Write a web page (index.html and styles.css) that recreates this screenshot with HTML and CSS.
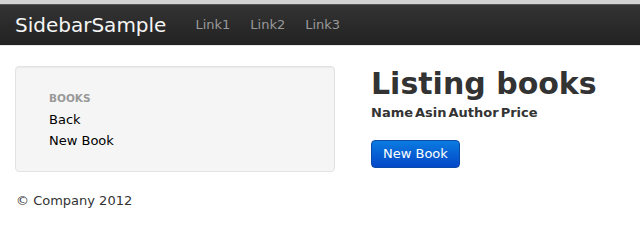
FILE: index.html
```html
<!DOCTYPE html>
<html lang="en">

<head>
  <meta charset="UTF-8">
  <meta name="viewport" content="width=device-width, initial-scale=1.0">
  <title>SidebarSample</title>
  <link rel="stylesheet" href="styles.css">
</head>

<body>
  <div class="topbar"></div>
  <div class="navbar">
    <a class="brand" href="#">SidebarSample</a>
    <ul class="nav">
      <li><a href="#">Link1</a></li>
      <li><a href="#">Link2</a></li>
      <li><a href="#">Link3</a></li>
    </ul>
  </div>

  <div class="container">
    <div class="row">
      <div class="sidebar well">
        <ul class="nav-list">
          <li class="nav-header">Books</li>
          <li><a href="#">Back</a></li>
          <li><a href="#">New Book</a></li>
        </ul>
      </div>

      <div class="content">
        <h1>Listing books</h1>
        <table class="books">
          <tr>
            <th>Name</th>
            <th>Asin</th>
            <th>Author</th>
            <th>Price</th>
          </tr>
        </table>
        <a class="btn-primary" href="#">New Book</a>
      </div>
    </div>

    <footer class="footer">
      <p>&copy; Company 2012</p>
    </footer>
  </div>
</body>

</html>
```

FILE: styles.css
```css
body {
  margin: 0;
  font-family: "DejaVu Sans", Verdana, sans-serif;
  font-size: 13px;
  line-height: 18px;
  color: #333;
  background: #fff;
}

a {
  text-decoration: none;
}

.topbar {
  height: 4px;
  background: #d2d2d2;
}

.navbar {
  display: flex;
  align-items: center;
  height: 40px;
  border-top: 1px solid #555;
  border-bottom: 1px solid #e8e8e8;
  background: linear-gradient(#333, #222);
  padding: 0 15px;
}

.brand {
  font-size: 20px;
  color: #f5f5f5;
  margin-right: 29px;
  line-height: 40px;
}

.nav {
  display: flex;
  gap: 20px;
  list-style: none;
  margin: 0;
  padding: 0;
}

.nav a {
  color: #999;
  font-size: 13px;
}

.container {
  padding: 0 15px;
}

.row {
  display: flex;
  margin-top: 20px;
}

.well {
  box-sizing: border-box;
  width: 320px;
  height: 106px;
  background: #f5f5f5;
  border: 1px solid #e3e3e3;
  border-radius: 4px;
  box-shadow: inset 0 1px 1px rgba(0, 0, 0, 0.05);
  padding: 21px 33px;
}

.nav-list {
  list-style: none;
  margin: 0;
  padding: 0;
}

.nav-list li {
  line-height: 21px;
}

.nav-list a {
  color: #000;
}

.nav-header {
  font-size: 10.5px;
  font-weight: bold;
  text-transform: uppercase;
  color: #999;
}

.content {
  margin-left: 36px;
}

h1 {
  margin: 0 0 2px;
  font-size: 30px;
  line-height: 36px;
  color: #333;
}

.books {
  border-collapse: collapse;
  margin-bottom: 18px;
}

.books th {
  padding: 0 2px 0 0;
  font-size: 13px;
  text-align: left;
}

.btn-primary {
  display: inline-block;
  padding: 4px 11px;
  font-size: 13px;
  line-height: 18px;
  color: #fff;
  background: linear-gradient(#0a7be0, #0447c8);
  border: 1px solid #0a4aa8;
  border-radius: 4px;
}

.footer p {
  margin: 20px 0 0 1px;
}
```
